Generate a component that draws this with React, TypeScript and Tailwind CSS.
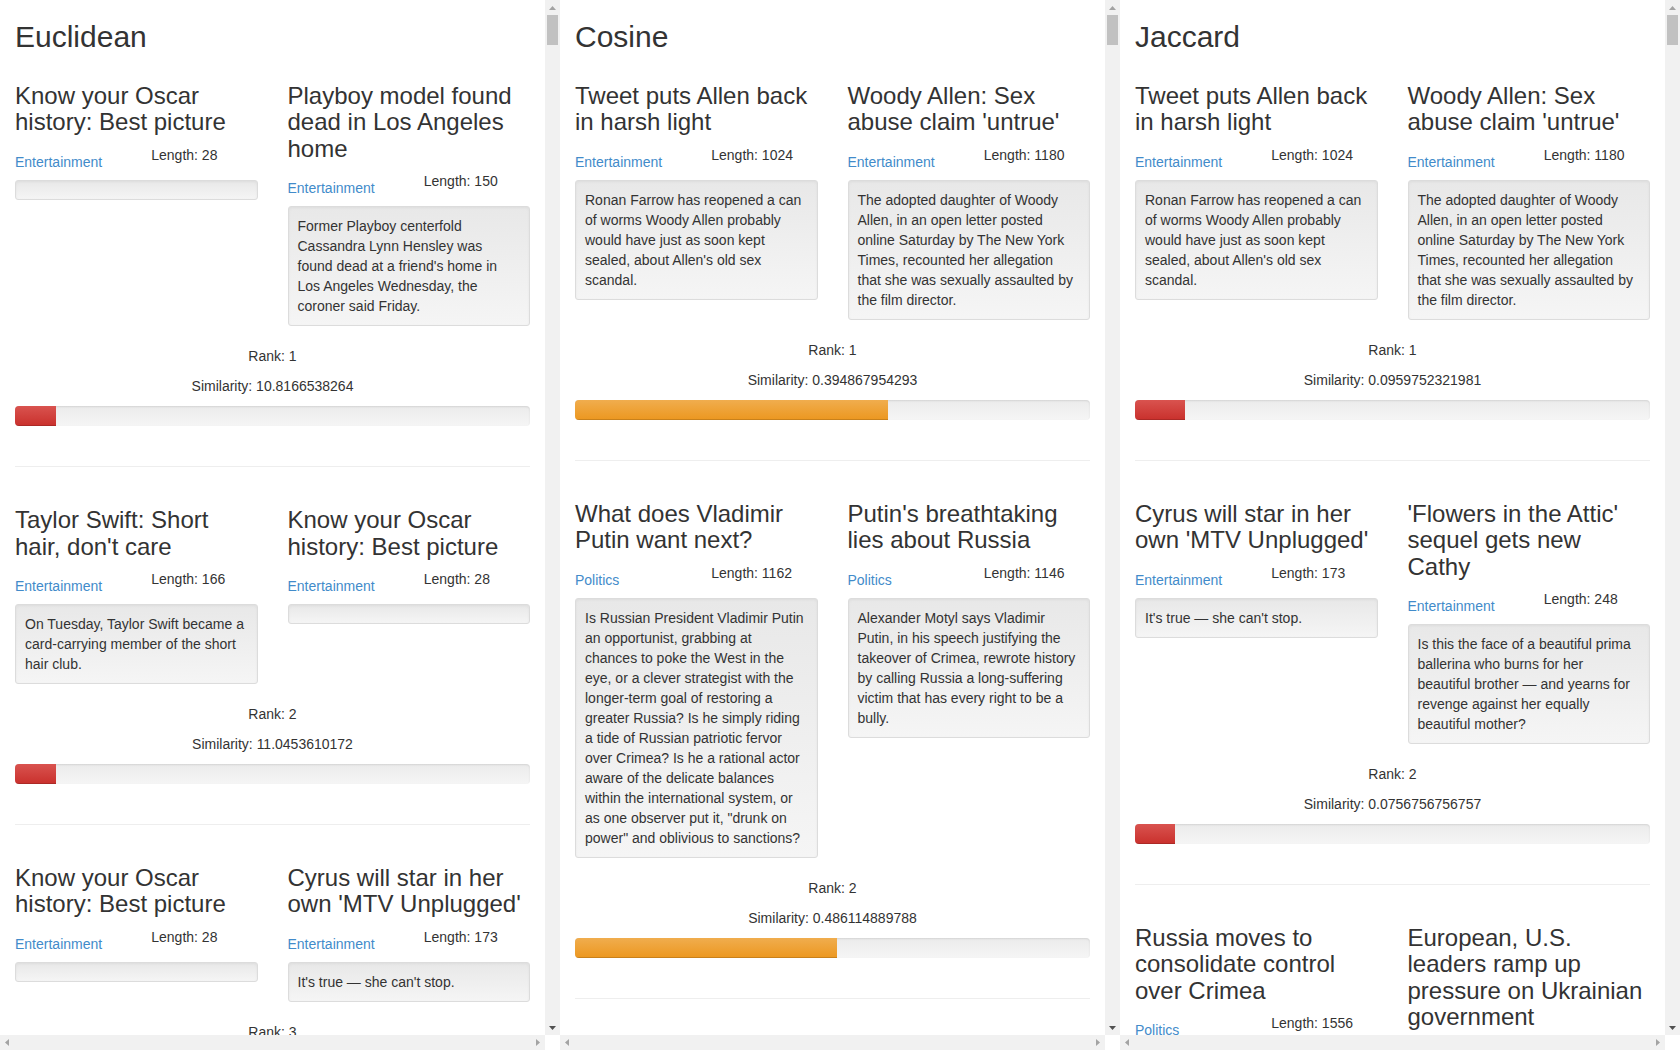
import React from "react";

type Article = {
	title: string;
	category: string;
	length: number;
	text: string;
};

type Match = {
	rank: number;
	similarity: string;
	percent: number;
	pair: [Article, Article];
};

const oscar: Article = {
	title: "Know your Oscar history: Best picture",
	category: "Entertainment",
	length: 28,
	text: "",
};

const cyrus: Article = {
	title: "Cyrus will star in her own 'MTV Unplugged'",
	category: "Entertainment",
	length: 173,
	text: "It's true — she can't stop.",
};

const tweet: Article = {
	title: "Tweet puts Allen back in harsh light",
	category: "Entertainment",
	length: 1024,
	text: "Ronan Farrow has reopened a can of worms Woody Allen probably would have just as soon kept sealed, about Allen's old sex scandal.",
};

const woody: Article = {
	title: "Woody Allen: Sex abuse claim 'untrue'",
	category: "Entertainment",
	length: 1180,
	text: "The adopted daughter of Woody Allen, in an open letter posted online Saturday by The New York Times, recounted her allegation that she was sexually assaulted by the film director.",
};

const euclidean: Match[] = [
	{
		rank: 1,
		similarity: "10.8166538264",
		percent: 7.9,
		pair: [
			oscar,
			{
				title: "Playboy model found dead in Los Angeles home",
				category: "Entertainment",
				length: 150,
				text: "Former Playboy centerfold Cassandra Lynn Hensley was found dead at a friend's home in Los Angeles Wednesday, the coroner said Friday.",
			},
		],
	},
	{
		rank: 2,
		similarity: "11.0453610172",
		percent: 7.9,
		pair: [
			{
				title: "Taylor Swift: Short hair, don't care",
				category: "Entertainment",
				length: 166,
				text: "On Tuesday, Taylor Swift became a card-carrying member of the short hair club.",
			},
			oscar,
		],
	},
	{
		rank: 3,
		similarity: "11.2249721603",
		percent: 7.9,
		pair: [oscar, cyrus],
	},
];

const cosine: Match[] = [
	{
		rank: 1,
		similarity: "0.394867954293",
		percent: 60.8,
		pair: [tweet, woody],
	},
	{
		rank: 2,
		similarity: "0.486114889788",
		percent: 50.8,
		pair: [
			{
				title: "What does Vladimir Putin want next?",
				category: "Politics",
				length: 1162,
				text: 'Is Russian President Vladimir Putin an opportunist, grabbing at chances to poke the West in the eye, or a clever strategist with the longer-term goal of restoring a greater Russia? Is he simply riding a tide of Russian patriotic fervor over Crimea? Is he a rational actor aware of the delicate balances within the international system, or as one observer put it, "drunk on power" and oblivious to sanctions?',
			},
			{
				title: "Putin's breathtaking lies about Russia",
				category: "Politics",
				length: 1146,
				text: "Alexander Motyl says Vladimir Putin, in his speech justifying the takeover of Crimea, rewrote history by calling Russia a long-suffering victim that has every right to be a bully.",
			},
		],
	},
];

const jaccard: Match[] = [
	{
		rank: 1,
		similarity: "0.0959752321981",
		percent: 9.8,
		pair: [tweet, woody],
	},
	{
		rank: 2,
		similarity: "0.0756756756757",
		percent: 7.8,
		pair: [
			cyrus,
			{
				title: "'Flowers in the Attic' sequel gets new Cathy",
				category: "Entertainment",
				length: 248,
				text: "Is this the face of a beautiful prima ballerina who burns for her beautiful brother — and yearns for revenge against her equally beautiful mother?",
			},
		],
	},
	{
		rank: 3,
		similarity: "0.0714285714286",
		percent: 7.3,
		pair: [
			{
				title: "Russia moves to consolidate control over Crimea",
				category: "Politics",
				length: 1556,
				text: "Russia moved to consolidate its control over Crimea as pro-Russian forces took over Ukrainian military bases on the peninsula.",
			},
			{
				title: "European, U.S. leaders ramp up pressure on Ukrainian government",
				category: "Politics",
				length: 1388,
				text: "European and U.S. leaders stepped up pressure on the Ukrainian government to reach a deal with the opposition.",
			},
		],
	},
];

const ArticleCol = ({ a }: { a: Article }) => (
	<div>
		<h3 className="mt-[20px] mb-[9px] text-[24px] leading-[26.4px] font-normal text-[#333]">{a.title}</h3>
		<div className="grid grid-cols-2 gap-x-[30px]">
			<div className="pt-[7px]">
				<a className="text-[#428bca]">{a.category}</a>
			</div>
			<div>Length: {a.length}</div>
		</div>
		<div className="mt-[8px] mb-[20px] rounded-[3px] border border-[#dcdcdc] bg-[linear-gradient(to_bottom,#e8e8e8_0%,#f5f5f5_100%)] p-[9px] shadow-[inset_0_1px_3px_rgba(0,0,0,0.05)]">
			{a.text}
		</div>
	</div>
);

const MatchBlock = ({ m, warning }: { m: Match; warning?: boolean }) => (
	<div className="flex flex-col">
		<div className="grid grid-cols-2 gap-x-[30px]">
			<ArticleCol a={m.pair[0]} />
			<ArticleCol a={m.pair[1]} />
		</div>
		<p className="mb-[10px] text-center">Rank: {m.rank}</p>
		<p className="mb-[10px] text-center">Similarity: {m.similarity}</p>
		<div className="mb-[20px] h-[20px] overflow-hidden rounded-[4px] bg-[linear-gradient(to_bottom,#ebebeb_0%,#f5f5f5_100%)] shadow-[inset_0_1px_2px_rgba(0,0,0,0.1)]">
			<div
				className={
					warning
						? "h-full bg-[linear-gradient(to_bottom,#f0ad4e_0%,#ec971f_100%)] shadow-[inset_0_-1px_0_rgba(0,0,0,0.15)]"
						: "h-full bg-[linear-gradient(to_bottom,#d9534f_0%,#c9302c_100%)] shadow-[inset_0_-1px_0_rgba(0,0,0,0.15)]"
				}
				style={{ width: `${m.percent}%` }}
			/>
		</div>
		<hr className="my-[20px] border-t border-[#eee]" />
	</div>
);

const Arrow = ({ dir, dark }: { dir: "up" | "down" | "left" | "right"; dark?: boolean }) => {
	const fill = dark ? "#505050" : "#a3a3a3";
	const pts = {
		up: "0,4 3.5,0 7,4",
		down: "0,0 7,0 3.5,4",
		left: "4,0 4,7 0,3.5",
		right: "0,0 4,3.5 0,7",
	}[dir];
	const vertical = dir === "up" || dir === "down";
	return (
		<svg width={vertical ? 7 : 4} height={vertical ? 4 : 7} viewBox={vertical ? "0 0 7 4" : "0 0 4 7"}>
			<polygon points={pts} fill={fill} />
		</svg>
	);
};

const Panel = ({ title, matches, warning }: { title: string; matches: Match[]; warning?: boolean }) => (
	<div className="flex h-[1050px] w-[560px] flex-col">
		<div className="flex h-[1035px]">
			<div className="w-[545px] overflow-hidden bg-white px-[15px] text-[14px] leading-[20px] text-[#333]">
				<h2 className="mt-[20px] mb-[10px] text-[30px] leading-[33px] font-normal">{title}</h2>
				{matches.map((m) => (
					<MatchBlock key={m.rank} m={m} warning={warning} />
				))}
			</div>
			<div className="flex w-[15px] flex-col bg-[#f1f1f1]">
				<div className="flex h-[15px] items-center justify-center">
					<Arrow dir="up" />
				</div>
				<div className="mx-[2px] h-[30px] bg-[#c1c1c1]" />
				<div className="flex-1" />
				<div className="flex h-[15px] items-center justify-center">
					<Arrow dir="down" dark />
				</div>
			</div>
		</div>
		<div className="flex h-[15px]">
			<div className="flex w-[545px] items-center justify-between bg-[#f1f1f1] px-[5px]">
				<Arrow dir="left" />
				<Arrow dir="right" />
			</div>
			<div className="w-[15px] bg-white" />
		</div>
	</div>
);

export default function App() {
	return (
		<div className="flex h-[1050px] w-[1680px] overflow-hidden bg-white font-['Liberation_Sans',Arial,sans-serif]">
			<Panel title="Euclidean" matches={euclidean} />
			<Panel title="Cosine" matches={cosine} warning />
			<Panel title="Jaccard" matches={jaccard} />
		</div>
	);
}
